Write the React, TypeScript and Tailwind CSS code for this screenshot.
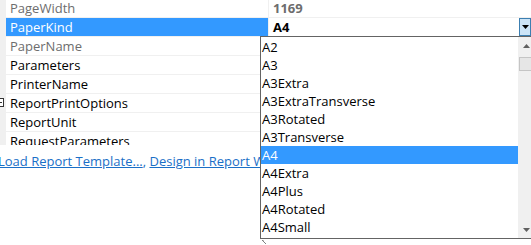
import React from 'react';

const rows = [
  { name: 'PageWidth', value: '1169', readOnly: true },
  { name: 'PaperKind', value: 'A4', selected: true },
  { name: 'PaperName', value: '', readOnly: true },
  { name: 'Parameters', value: '' },
  { name: 'PrinterName', value: '' },
  { name: 'ReportPrintOptions', value: '', expandable: true },
  { name: 'ReportUnit', value: '' },
  { name: 'RequestParameters', value: '' },
];

const paperKinds = [
  'A2', 'A3', 'A3Extra', 'A3ExtraTransverse', 'A3Rotated', 'A3Transverse',
  'A4', 'A4Extra', 'A4Plus', 'A4Rotated', 'A4Small',
];

function GridRow({ row, first }: { row: (typeof rows)[number]; first: boolean }) {
  return (
    <div className={`flex shrink-0 border-b border-[#f0f0f0] ${first ? 'h-[18px]' : 'h-[19px]'}`}>
      <div className="relative w-[6px] shrink-0 bg-[#f0f0f0]">
        {row.expandable && (
          <div className="absolute left-[-5px] top-[4px] flex h-[9px] w-[9px] items-center justify-center border border-[#333] bg-white">
            <div className="h-px w-[5px] bg-[#333]" />
          </div>
        )}
      </div>
      <div
        className={`flex w-[262px] shrink-0 items-center pl-[4px] ${
          row.selected ? 'bg-[#3399ff] text-white' : row.readOnly ? 'text-[#6d6d6d]' : 'text-black'
        }`}
      >
        {row.name}
      </div>
      <div className="w-px shrink-0 bg-[#f0f0f0]" />
      <div className={`flex flex-1 items-center pl-[4px] font-bold ${row.readOnly ? 'text-[#6d6d6d]' : 'text-black'}`}>
        {row.value}
      </div>
      {row.selected && (
        <div className="flex h-[18px] w-[12px] shrink-0 items-center justify-center border border-[#3c7fb1] bg-[#cce4f7]">
          <svg width="7" height="4" viewBox="0 0 7 4">
            <path d="M0 0h7L3.5 4z" fill="#000" />
          </svg>
        </div>
      )}
    </div>
  );
}

export default function App() {
  return (
    <div
      className="relative h-[245px] w-[531px] overflow-hidden bg-white text-[13px] leading-none"
      style={{ fontFamily: '"Open Sans", "Noto Sans CJK SC", sans-serif' }}
    >
      <div className="flex h-[145px] flex-col overflow-hidden">
        {rows.map((row, i) => (
          <GridRow key={row.name} row={row} first={i === 0} />
        ))}
      </div>

      <div className="ml-[-2px] mt-[10px] flex text-[#1a6fc7]">
        <span className="underline">Load Report Template...</span>
        <span>,&nbsp;</span>
        <span className="underline whitespace-nowrap">Design in Report Wizard...</span>
      </div>

      {/* dropdown list */}
      <div className="absolute left-[260px] top-[36px] flex h-[203px] w-[290px] border border-[#646464] bg-white">
        <div className="flex w-[257px] shrink-0 flex-col pt-px">
          {paperKinds.map((kind) => (
            <div
              key={kind}
              className={`flex h-[18px] shrink-0 items-center pl-[1px] ${
                kind === 'A4' ? 'bg-[#3399ff] text-white' : 'text-black'
              }`}
            >
              {kind}
            </div>
          ))}
        </div>
        <div className="flex w-[17px] shrink-0 flex-col items-center bg-[#f0f0f0]">
          <div className="flex h-[17px] w-full items-center justify-center">
            <svg width="7" height="4" viewBox="0 0 7 4">
              <path d="M3.5 0L7 4H0z" fill="#606060" />
            </svg>
          </div>
          <div className="mt-[3px] h-[14px] w-[15px] border border-[#c5c5c5] bg-[#e6e6e6]" />
          <div className="flex-1" />
          <div className="flex h-[17px] w-full items-center justify-center">
            <svg width="7" height="4" viewBox="0 0 7 4">
              <path d="M0 0h7L3.5 4z" fill="#606060" />
            </svg>
          </div>
        </div>
      </div>
      <svg className="absolute left-[262px] top-[240px]" width="6" height="5" viewBox="0 0 6 5">
        <path d="M0 0L4 4M1 0h1" stroke="#808080" strokeWidth="1" fill="none" />
      </svg>
    </div>
  );
}
